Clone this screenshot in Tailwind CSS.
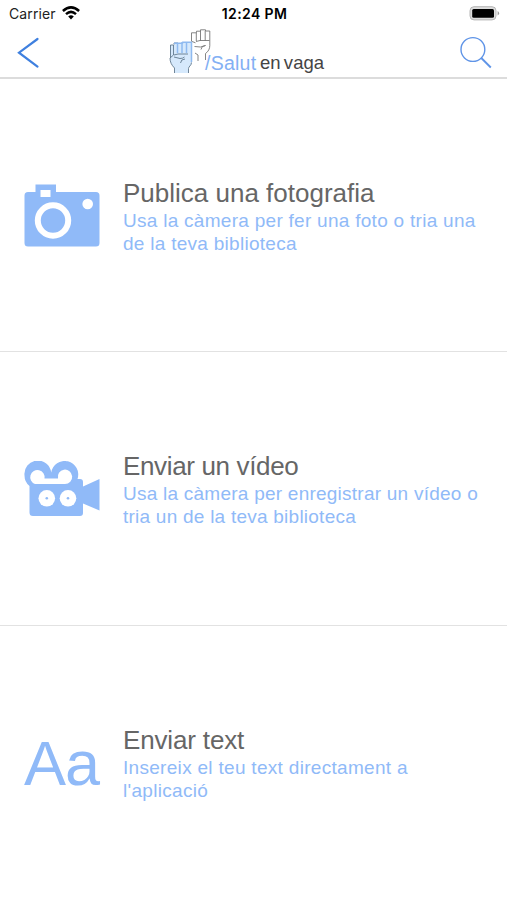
<!DOCTYPE html>
<html lang="ca">
<head>
<meta charset="utf-8">
<title>Salut en vaga</title>
<script src="https://cdn.jsdelivr.net/npm/@tailwindcss/browser@4"></script>
</head>
<body class="w-[507px] h-[900px] overflow-hidden bg-white flex flex-col font-['Liberation_Sans',sans-serif]">
<header class="h-[79px] shrink-0 border-b-2 border-[#dcdcdc] flex flex-col">
  <div class="h-[27px] grid grid-cols-3 items-center pl-[9px] pr-[7px] font-[Inter,sans-serif] text-[14px] text-[#222]">
    <div class="flex items-center gap-[6px]"><span class="tracking-[0.1px]">Carrier</span>
      <svg class="w-[18px] h-[14px] -mt-[2px]" viewBox="0 0 18 14" fill="none" stroke="#000" stroke-width="2.5"><path d="M.9 5Q9-2.3 17.1 5M4 8.1q5-4.4 10 0"/><path d="M6.2 10.5q2.8-2.3 5.6 0L9 13.4z" fill="#000" stroke="none"/></svg>
    </div>
    <span class="text-center font-semibold text-black tracking-[0.4px] whitespace-nowrap">12:24 PM</span>
    <svg class="w-[31px] h-[16px] justify-self-end" viewBox="0 0 31 16"><rect x="1" y=".7" width="26" height="13.200" rx="4" fill="#ddd" stroke="#b5b5b5"/><rect x="3.200" y="3" width="21.800" height="8.700" rx="1.500" fill="#000"/><path d="M28.600 5q3 2.200 0 4.600z" fill="#999"/></svg>
  </div>
  <div class="h-[50px] flex items-start">
    <svg class="w-[50px] h-[50px] ml-[4px]" viewBox="4 27 50 50" fill="none" stroke="#3f80df" stroke-width="2.2" stroke-linecap="round"><path d="M37.500 39 19 52.700 37.500 66.700"/></svg>
    <svg class="w-[46px] h-[50px] ml-[112px] shrink-0" viewBox="166 27 46 50" fill="none" stroke="#777" stroke-width=".9" stroke-linejoin="round">
      <path fill="#fff" d="M205.500 60v-6.500c3-2 4.300-5 4.300-8V31h-4.300v-1.200h-5v1.400h-4v1.600h-5v8.500l4 1.500"/>
      <path d="M196.300 33v8M200.500 31v10M205.200 31v10M196 41.500l4-1h9.500M194.500 46.500l6 .5 5-1.500M205.500 45.500q-4 0-4.500 4M195 53l3 2v6"/>
      <path fill="#d6e9fc" stroke="none" d="M174.500 73v-5c-3-3-4.500-6-4.500-10V45h4v-2h17.500v19.500c0 3-3 4-3 6V73z"/>
      <path stroke="#62798d" d="M174.500 73v-5c-3-3-4.500-6-4.500-10l3.500-3V45h-3v13M174 44.500v-1.500h4M188.500 73v-4.500c0-2 3-3 3-6M174 55l4-1h10M174 57l6 1.500q3 0 4.500-1.500M185 59q-4 0-4.500 4"/>
      <path stroke="#8fbaf0" stroke-width="1.500" d="M177.500 43v10M182 42v11M186.500 42v11M174 43.200h8.500v-1h9V62"/>
    </svg>
    <div class="-ml-[7px] mt-[25px] w-[121px] h-[22px] leading-[22px] flex whitespace-nowrap text-[18.500px]"><span class="w-[55px] text-[#83b0f4] text-[19.500px] tracking-[0.250px]">/Salut</span><span class="text-[#444] tracking-[0.050px] [word-spacing:-2px]">en vaga</span></div>
    <svg class="w-[40px] h-[50px] ml-auto mr-[11px]" viewBox="456 27 40 50" fill="none" stroke="#5f94e7" stroke-width="1.400"><circle cx="472.900" cy="49.500" r="11.900"/><path stroke-width="1.900" d="m481.300 58 9.500 9.500"/></svg>
  </div>
</header>
<main>
  <section class="h-[273px] border-b border-[#e2e2e2] flex">
    <svg class="w-[76px] h-[64px] ml-[24px] mt-[104px] shrink-0" viewBox="24 183 76 64" fill="#90baf8"><path fill-rule="evenodd" d="M35.500 184.500H56V192H96q3.500 0 3.500 3.500V243q0 3.500-3.500 3.500H28q-3.500 0-3.500-3.500v-47.500q0-3.500 3.500-3.500h7.500zM40.500 190v7h10v-7z"/><circle cx="53" cy="220.500" r="15.200" fill="none" stroke="#fff" stroke-width="6"/><circle cx="87.700" cy="204" r="5.300" fill="#fff"/></svg>
    <div class="ml-[23px] mt-[99px] whitespace-nowrap"><h2 class="h-[32px] leading-[30px] text-[26px] text-[#666]">Publica una fotografia</h2><p class="leading-[22.500px] text-[19px] tracking-[0.280px] text-[#90baf8]">Usa la càmera per fer una foto o tria una<br>de la teva biblioteca</p></div>
  </section>
  <section class="h-[274px] border-b border-[#e2e2e2] flex">
    <svg class="w-[76px] h-[56px] ml-[24px] mt-[109px] shrink-0" viewBox="24 461 76 56" fill="#90baf8"><path d="M24.500 475.500a13.300 13.300 0 0 1 26.700-3 13.600 13.600 0 1 1 26.300 6.500H80q3 0 3 3v4.500l16.500-7.500v31.500L83 503.500v9.500q0 3-3 3H33q-3.500 0-3.500-3.500V486q-5-4-5-10.500"/><path fill="#fff" d="M35 484a7.200 7.200 0 1 1 9.500-5.500h13.500A7.200 7.200 0 1 1 65 484z"/><circle cx="46.800" cy="498.300" r="8.300" fill="#fff"/><circle cx="68" cy="498.300" r="8.300" fill="#fff"/><circle cx="46.800" cy="498.300" r="1.300"/><circle cx="68" cy="498.300" r="1.300"/></svg>
    <div class="ml-[23px] mt-[99px] whitespace-nowrap"><h2 class="h-[32px] leading-[30px] text-[26px] tracking-[-0.350px] text-[#666]">Enviar un vídeo</h2><p class="leading-[22.500px] text-[19px] tracking-[0.240px] text-[#90baf8]">Usa la càmera per enregistrar un vídeo o<br>tria un de la teva biblioteca</p></div>
  </section>
  <section class="h-[274px] flex">
    <div class="w-[76px] ml-[24px] mt-[99px] leading-[76px] text-[63px] tracking-[-1px] text-[#90baf8] shrink-0 whitespace-nowrap">Aa</div>
    <div class="ml-[23px] mt-[99px] whitespace-nowrap"><h2 class="h-[32px] leading-[30px] text-[26px] tracking-[-0.150px] text-[#666]">Enviar text</h2><p class="leading-[22.500px] text-[19px] tracking-[0.300px] text-[#90baf8]">Insereix el teu text directament a<br>l'aplicació</p></div>
  </section>
</main>
</body>
</html>
